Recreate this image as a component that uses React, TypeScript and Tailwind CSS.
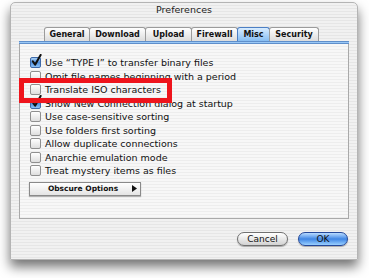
const stripes =
  'bg-[image:repeating-linear-gradient(180deg,#f1f1f1_0px,#f1f1f1_2px,#e6e6e6_2px,#e6e6e6_3px)]';
const paneStripes =
  'bg-[image:repeating-linear-gradient(180deg,#f7f7f7_0px,#f7f7f7_2px,#ededed_2px,#ededed_3px)]';

const TABS = [
  { label: 'General', w: 'w-[46px]' },
  { label: 'Download', w: 'w-[57px]' },
  { label: 'Upload', w: 'w-[47px]' },
  { label: 'Firewall', w: 'w-[47px]' },
  { label: 'Misc', w: 'w-[33px]', active: true },
  { label: 'Security', w: 'w-[50px]' },
];

const OPTIONS = [
  { label: 'Use “TYPE I” to transfer binary files', checked: true },
  { label: 'Omit file names beginning with a period', checked: false },
  { label: 'Translate ISO characters', checked: false },
  { label: 'Show New Connection dialog at startup', checked: true },
  { label: 'Use case-sensitive sorting', checked: false },
  { label: 'Use folders first sorting', checked: false },
  { label: 'Allow duplicate connections', checked: false },
  { label: 'Anarchie emulation mode', checked: false },
  { label: 'Treat mystery items as files', checked: false },
];

function Checkbox({ checked }: { checked: boolean }) {
  return (
    <span
      className={
        checked
          ? 'relative h-[11px] w-[11px] shrink-0 rounded-[2px] border border-[#3d69a8] bg-gradient-to-b from-[#a9d0f5] via-[#4f8fde] to-[#8cc2f7]'
          : 'relative h-[11px] w-[11px] shrink-0 rounded-[2px] border border-[#8f8f8f] bg-gradient-to-b from-[#ffffff] to-[#dedede]'
      }
    >
      {checked && (
        <svg
          viewBox="0 0 12 14"
          className="absolute left-[0px] top-[-4px] h-[13px] w-[11px]"
        >
          <path
            d="M2 8 L4.5 11.5 L10.5 1"
            fill="none"
            stroke="#111"
            strokeWidth="2.2"
            strokeLinecap="round"
            strokeLinejoin="round"
          />
        </svg>
      )}
    </span>
  );
}

export default function App() {
  return (
    <div
      className="min-h-screen bg-white pl-[10px] pt-[2px] text-[#111]"
      style={{ fontFamily: '"DejaVu Sans", "Noto Sans", sans-serif' }}
    >
      <div
        className={`relative flex h-[258px] w-[348px] flex-col rounded-t-[5px] border border-[#b4b4b4] shadow-[0_7px_12px_rgba(0,0,0,0.55)] ${stripes}`}
      >
        {/* title bar */}
        <div className="flex h-[15px] items-center justify-center border-b border-[#dcdcdc] text-[9.5px] leading-none text-[#222]">
          Preferences
        </div>

        <div className="flex flex-col px-[8px] pt-[9px]">
          {/* tabs */}
          <div className="flex h-[14px] pl-[25px]">
            {TABS.map((tab) => (
              <div
                key={tab.label}
                className={
                  tab.active
                    ? `${tab.w} -ml-px flex items-center justify-center rounded-t-[3px] border border-b-0 border-[#4c7fc4] bg-gradient-to-b from-[#d8ecff] to-[#86bdf2] text-[8px] font-bold leading-none first:ml-0`
                    : `${tab.w} -ml-px flex items-center justify-center rounded-t-[3px] border border-b-0 border-[#9b9b9b] bg-gradient-to-b from-[#ffffff] to-[#dcdcdc] text-[8px] font-bold leading-none first:ml-0`
                }
              >
                {tab.label}
              </div>
            ))}
          </div>

          {/* tab pane */}
          <div
            className={`relative flex h-[178px] flex-col border-x border-b border-[#a9a9a9] ${paneStripes}`}
          >
            <div className="-mx-px h-[3px] border-y border-[#5f8fcb] bg-[#9ac8f5]" />
            <div className="flex flex-col pl-[10px] pt-[12px]">
              {OPTIONS.map((opt) => (
                <div
                  key={opt.label}
                  className="flex h-[13.5px] items-center gap-[4px] text-[9.5px] leading-none"
                >
                  <Checkbox checked={opt.checked} />
                  <span className="whitespace-nowrap">{opt.label}</span>
                </div>
              ))}
            </div>
            <div className="ml-[9px] mt-[4px] flex h-[14px] w-[112px] items-center border border-[#8a8a8a] bg-gradient-to-b from-[#ffffff] to-[#e4e4e4] shadow-[0_1px_1px_rgba(0,0,0,0.25)]">
              <span className="flex-1 pl-[4px] text-center text-[7.5px] font-bold leading-none">
                Obscure Options
              </span>
              <svg viewBox="0 0 5 7" className="mr-[3px] h-[7px] w-[5px]">
                <path d="M0 0 L5 3.5 L0 7 Z" fill="#111" />
              </svg>
            </div>

            {/* highlight marker */}
            <div className="absolute left-[-1px] top-[37px] h-[25px] w-[153px] border-[5px] border-[#ee141c]" />
          </div>

          {/* buttons */}
          <div className="mt-[13px] flex justify-end gap-[10px] pr-[1px]">
            <div className="flex h-[14px] w-[51px] items-center justify-center rounded-full border border-[#707070] bg-gradient-to-b from-[#ffffff] via-[#e9e9e9] to-[#d2d2d2] text-[9px] leading-none shadow-[0_1px_1px_rgba(0,0,0,0.3)]">
              Cancel
            </div>
            <div className="flex h-[14px] w-[50px] items-center justify-center rounded-full border border-[#24489a] bg-gradient-to-b from-[#b9dcff] via-[#3f86e4] to-[#9ad0ff] text-[9px] leading-none shadow-[0_1px_1px_rgba(0,0,0,0.3)]">
              OK
            </div>
          </div>
        </div>
      </div>
    </div>
  );
}
